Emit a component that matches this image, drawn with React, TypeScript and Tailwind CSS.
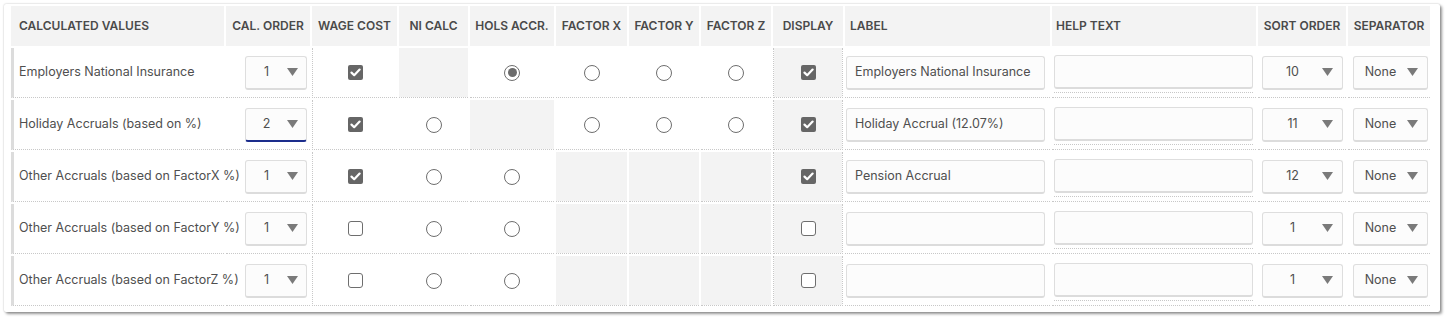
import React from "react";

type Row = {
  name: string;
  cal: string;
  focused?: boolean;
  wage: boolean;
  ni: "gray" | "off";
  hols: "gray" | "on" | "off";
  factors: "gray" | "off";
  display: boolean;
  label: string;
  sort: string;
};

const rows: Row[] = [
  { name: "Employers National Insurance", cal: "1", wage: true, ni: "gray", hols: "on", factors: "off", display: true, label: "Employers National Insurance", sort: "10" },
  { name: "Holiday Accruals (based on %)", cal: "2", focused: true, wage: true, ni: "off", hols: "gray", factors: "off", display: true, label: "Holiday Accrual (12.07%)", sort: "11" },
  { name: "Other Accruals (based on FactorX %)", cal: "1", wage: true, ni: "off", hols: "off", factors: "gray", display: true, label: "Pension Accrual", sort: "12" },
  { name: "Other Accruals (based on FactorY %)", cal: "1", wage: false, ni: "off", hols: "off", factors: "gray", display: false, label: "", sort: "1" },
  { name: "Other Accruals (based on FactorZ %)", cal: "1", wage: false, ni: "off", hols: "off", factors: "gray", display: false, label: "", sort: "1" },
];

const Arrow = () => (
  <svg width="11" height="8" viewBox="0 0 11 8" className="shrink-0">
    <polygon points="0,0 11,0 5.5,8" fill="#7a7a7a" />
  </svg>
);

function Select({ value, width, pr, focused }: { value: string; width: string; pr: string; focused?: boolean }) {
  return (
    <div
      className={`flex h-[34px] items-center rounded-[3px] border border-[#dedede] bg-[#fcfcfc] ${width} ${pr} ${
        focused ? "border-b-2 border-b-[#1c2d8c]" : "border-b-2 border-b-[#dcdcdc]"
      }`}
    >
      <span className="flex-1 text-center text-[12.5px] text-[#4f4f4f]">{value}</span>
      <Arrow />
    </div>
  );
}

function Checkbox({ checked }: { checked: boolean }) {
  return checked ? (
    <div className="flex h-[15px] w-[15px] items-center justify-center rounded-[2px] bg-[#666666]">
      <svg width="11" height="9" viewBox="0 0 11 9">
        <path d="M1.5 4.6 L4.2 7.2 L9.6 1.6" stroke="#fff" strokeWidth="2.2" fill="none" strokeLinecap="round" strokeLinejoin="round" />
      </svg>
    </div>
  ) : (
    <div className="h-[15px] w-[15px] rounded-[3px] border border-[#6e6e6e] bg-white" />
  );
}

function Radio({ on }: { on?: boolean }) {
  return (
    <div className="flex h-[16px] w-[16px] items-center justify-center rounded-full border border-[#6e6e6e] bg-white">
      {on && <div className="h-[9px] w-[9px] rounded-full bg-[#6b6b6b]" />}
    </div>
  );
}

const th = "h-[40px] bg-[#f3f3f3] text-[12px] font-semibold uppercase text-[#4a4a4a] whitespace-nowrap p-0";
const td = "h-[50px] p-0 border-b border-dotted border-b-[#c8c8c8] bg-clip-padding align-middle";
const gray = "bg-[#f3f3f3]";

export default function App() {
  return (
    <div className="min-h-[321px] bg-white pl-[4px] pt-[4px]" style={{ fontFamily: "Inter, 'Noto Sans', sans-serif" }}>
      <div className="w-[1436px] rounded-[2px] bg-white pl-[5px] pr-[8px] pb-[4px] shadow-[0_0_2px_rgba(0,0,0,0.25),2px_2px_3px_rgba(0,0,0,0.4)]">
        <table className="table-fixed border-separate border-spacing-[2px]" style={{ width: 1423 }}>
          <colgroup>
            <col style={{ width: 213 }} />
            <col style={{ width: 84 }} />
            <col style={{ width: 85 }} />
            <col style={{ width: 69 }} />
            <col style={{ width: 84 }} />
            <col style={{ width: 71 }} />
            <col style={{ width: 70 }} />
            <col style={{ width: 70 }} />
            <col style={{ width: 70 }} />
            <col style={{ width: 205 }} />
            <col style={{ width: 204 }} />
            <col style={{ width: 88 }} />
            <col style={{ width: 82 }} />
          </colgroup>
          <thead>
            <tr>
              <th className={`${th} pl-[8px] text-left`}>Calculated Values</th>
              <th className={`${th} text-center`}>Cal. Order</th>
              <th className={`${th} text-center`}>Wage Cost</th>
              <th className={`${th} text-center`}>NI Calc</th>
              <th className={`${th} text-center`}>Hols Accr.</th>
              <th className={`${th} text-center`}>Factor X</th>
              <th className={`${th} text-center`}>Factor Y</th>
              <th className={`${th} text-center`}>Factor Z</th>
              <th className={`${th} text-center`}>Display</th>
              <th className={`${th} pl-[5px] text-left`}>Label</th>
              <th className={`${th} pl-[4px] text-left`}>Help Text</th>
              <th className={`${th} text-center`}>Sort Order</th>
              <th className={`${th} text-center`}>Separator</th>
            </tr>
          </thead>
          <tbody>
            {rows.map((r, i) => (
              <tr key={i}>
                <td className={`${td} border-l-[3px] border-l-[#dcdcdc] [border-left-style:solid] pl-[5px] text-[12.5px] text-[#4f4f4f] whitespace-nowrap`}>{r.name}</td>
                <td className={td}>
                  <div className="flex justify-end pr-[3px]">
                    <Select value={r.cal} width="w-[62px]" pr="pr-[8px]" focused={r.focused} />
                  </div>
                </td>
                <td className={`${td} border-l border-l-[#c8c8c8]`}>
                  <div className="flex justify-center">
                    <Checkbox checked={r.wage} />
                  </div>
                </td>
                <td className={`${td} ${r.ni === "gray" ? gray : ""}`}>
                  {r.ni !== "gray" && (
                    <div className="flex justify-center">
                      <Radio />
                    </div>
                  )}
                </td>
                <td className={`${td} ${r.hols === "gray" ? gray : ""}`}>
                  {r.hols !== "gray" && (
                    <div className="flex justify-center">
                      <Radio on={r.hols === "on"} />
                    </div>
                  )}
                </td>
                {[0, 1, 2].map((k) => (
                  <td key={k} className={`${td} ${r.factors === "gray" ? gray : ""}`}>
                    {r.factors !== "gray" && (
                      <div className="flex justify-center">
                        <Radio />
                      </div>
                    )}
                  </td>
                ))}
                <td className={`${td} ${gray} border-x border-x-[#c8c8c8]`}>
                  <div className="flex justify-center">
                    <Checkbox checked={r.display} />
                  </div>
                </td>
                <td className={td}>
                  <div className="pl-[1px]">
                    <div className="flex h-[34px] w-[199px] items-center rounded-[3px] border border-[#dedede] border-b-2 border-b-[#dcdcdc] bg-[#fcfcfc] px-[8px] text-[12.5px] text-[#4f4f4f] whitespace-nowrap">
                      {r.label}
                    </div>
                  </div>
                </td>
                <td className={td}>
                  <div className="pl-[2px] pt-[3px]">
                    <div className="h-[34px] w-[199px] rounded-[3px] border border-[#dedede] border-b-2 border-b-[#dcdcdc] bg-[#fcfcfc]" />
                    <div className="mt-[3px] w-[199px] border-b border-dotted border-b-[#c8c8c8]" />
                  </div>
                </td>
                <td className={td}>
                  <div className="pl-[4px]">
                    <Select value={r.sort} width="w-[81px]" pr="pr-[9px]" />
                  </div>
                </td>
                <td className={td}>
                  <div className="pl-[5px]">
                    <Select value="None" width="w-[75px]" pr="pr-[9px]" />
                  </div>
                </td>
              </tr>
            ))}
          </tbody>
        </table>
      </div>
    </div>
  );
}
